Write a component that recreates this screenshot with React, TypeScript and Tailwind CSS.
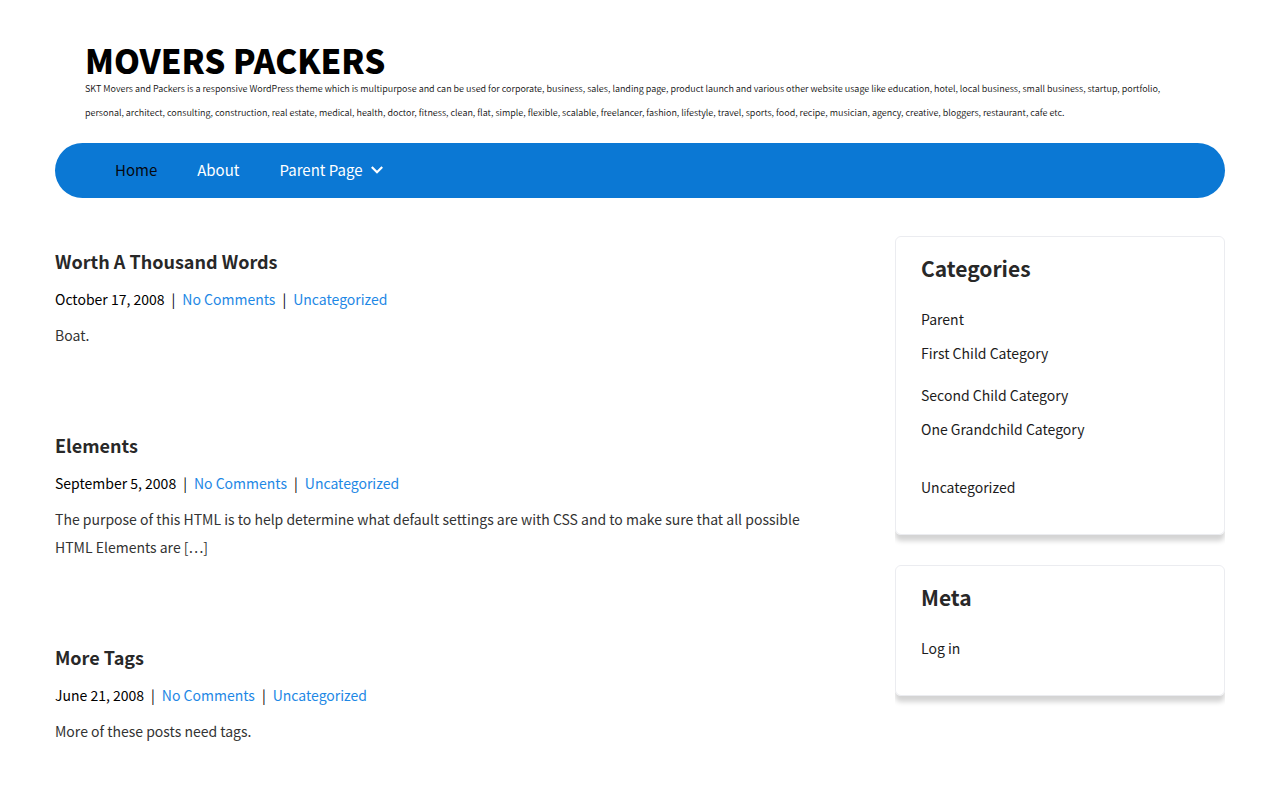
interface Post {
  title: string;
  date: string;
  excerpt: string;
}

const POSTS: Post[] = [
  { title: 'Worth A Thousand Words', date: 'October 17, 2008', excerpt: 'Boat.' },
  {
    title: 'Elements',
    date: 'September 5, 2008',
    excerpt: 'The purpose of this HTML is to help determine what default settings are with CSS and to make sure that all possible HTML Elements are […]',
  },
  { title: 'More Tags', date: 'June 21, 2008', excerpt: 'More of these posts need tags.' },
];

const Header = () => (
  <header className="px-[30px] pt-[42px]">
    <h1 className="text-[33px] leading-9 font-black text-black uppercase">
      <a href="#">Movers Packers</a>
    </h1>
    <p className="-mt-px text-[9px] leading-6 font-[350] text-[#111]">
      SKT Movers and Packers is a responsive WordPress theme which is multipurpose and can be used for corporate, business, sales, landing page, product launch and various other website usage like education, hotel, local business, small business, startup, portfolio, personal, architect, consulting, construction, real estate, medical, health, doctor, fitness, clean, flat, simple, flexible, scalable, freelancer, fashion, lifestyle, travel, sports, food, recipe, musician, agency, creative, bloggers, restaurant, cafe etc.
    </p>
  </header>
);

const Nav = () => (
  <nav className="mt-[18px] rounded-full bg-[#0b78d4] px-[60px] pb-px text-[15px] leading-[54px] text-white">
    <ul className="flex gap-10">
      <li><a href="#" className="text-[#06080f]">Home</a></li>
      <li><a href="#">About</a></li>
      <li>
        <a href="#" className="flex items-center gap-2">
          Parent Page
          <svg width="12" height="8" viewBox="0 0 12 8" fill="none" stroke="currentColor" strokeWidth="2.2" aria-hidden="true">
            <path d="M.8 1L6 6.2 11.2 1" />
          </svg>
        </a>
      </li>
    </ul>
  </nav>
);

const PostItem = ({ post }: { post: Post }) => (
  <article className="pb-[82px]">
    <h2 className="text-lg leading-7 font-bold text-[#282828]"><a href="#">{post.title}</a></h2>
    <div className="mt-[10px] flex gap-[7px] text-sm leading-7 text-black">
      <span>{post.date}</span>
      <span>|</span>
      <a href="#" className="text-[#1e88e5]">No Comments</a>
      <span>|</span>
      <a href="#" className="text-[#1e88e5]">Uncategorized</a>
    </div>
    <p className="mt-2 text-sm leading-7 text-[#333]">{post.excerpt}</p>
  </article>
);

const Widget = ({ title, children }: { title: string; children: React.ReactNode }) => (
  <div className="overflow-hidden pb-[30px]">
    <aside className="rounded-md border border-[#ebecf0] px-[25px] pt-[15px] pb-[30px] shadow-[0_6px_5px_#d4d4d4]">
      <h3 className="mb-[18px] text-[21px] leading-8 font-bold text-[#282828]">{title}</h3>
      {children}
    </aside>
  </div>
);

export default function App() {
  return (
    <div className="mx-auto max-w-[1170px] bg-white font-['Noto_Sans_CJK_SC',sans-serif]">
      <Header />
      <Nav />
      <div className="flex justify-between pt-[38px]">
        <main className="w-[770px] pt-[11px]">
          {POSTS.map(post => <PostItem key={post.title} post={post} />)}
        </main>
        <div className="w-[330px]">
          <Widget title="Categories">
            <ul className="text-sm leading-[34px] text-[#1c1c1c]">
              <li>
                <a href="#">Parent</a>
                <ul>
                  <li className="mb-2"><a href="#">First Child Category</a></li>
                  <li>
                    <a href="#">Second Child Category</a>
                    <ul className="mb-6"><li><a href="#">One Grandchild Category</a></li></ul>
                  </li>
                </ul>
              </li>
              <li><a href="#">Uncategorized</a></li>
            </ul>
          </Widget>
          <Widget title="Meta">
            <ul className="text-sm leading-[34px] text-[#1c1c1c]">
              <li><a href="#">Log in</a></li>
            </ul>
          </Widget>
        </div>
      </div>
    </div>
  );
}
